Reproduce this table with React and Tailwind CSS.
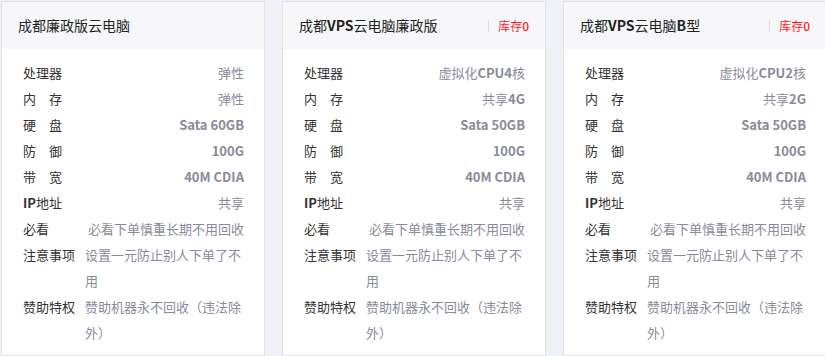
import React from 'react';

const cards = [
  {
    title: '成都廉政版云电脑',
    stock: null,
    specs: ['弹性', '弹性', 'Sata 60GB', '100G', '40M CDIA', '共享'],
  },
  {
    title: '成都VPS云电脑廉政版',
    stock: '库存0',
    specs: ['虚拟化CPU4核', '共享4G', 'Sata 50GB', '100G', '40M CDIA', '共享'],
  },
  {
    title: '成都VPS云电脑B型',
    stock: '库存0',
    specs: ['虚拟化CPU2核', '共享2G', 'Sata 50GB', '100G', '40M CDIA', '共享'],
  },
];

const labels = [['处理器'], ['内', '存'], ['硬', '盘'], ['防', '御'], ['带', '宽'], ['IP地址']];

// latin runs come out heavier than the CJK around them
function Mixed({ text, weight = 'font-bold' }) {
  const parts = text.split(/([A-Za-z0-9][A-Za-z0-9 ]*)/);
  return parts.map((p, i) =>
    /^[A-Za-z0-9]/.test(p) ? (
      <span key={i} className={weight}>{p}</span>
    ) : (
      <span key={i}>{p}</span>
    )
  );
}

function Label({ parts }) {
  if (parts.length === 1) {
    return (
      <span className="shrink-0 text-[#333]">
        <Mixed text={parts[0]} />
      </span>
    );
  }
  return (
    <span className="flex w-[39px] shrink-0 justify-between text-[#333]">
      <span>{parts[0]}</span>
      <span>{parts[1]}</span>
    </span>
  );
}

function Card({ card }) {
  return (
    <div className="w-[264px] shrink-0 border border-[#e1e1ea] bg-white">
      <div className="flex h-[47px] items-center justify-between bg-[#f7f7fa] pl-[16px] pr-[16px]">
        <span className="text-[14px] text-[#222]">
          <Mixed text={card.title} weight="font-semibold" />
        </span>
        {card.stock && (
          <div className="flex items-center">
            <span className="mr-[9px] h-[12px] w-px bg-[#dcdce2]" />
            <span className="text-[12px] text-[#ff1a1a]">
              <Mixed text={card.stock} weight="font-medium" />
            </span>
          </div>
        )}
      </div>
      <div className="px-[20px] pb-[10px] pt-[11px] text-[13px] leading-[26px]">
        {card.specs.map((v, i) => (
          <div key={i} className="flex justify-between pl-px">
            <Label parts={labels[i]} />
            <span className="text-[#8a8a9a]">
              <Mixed text={v} />
            </span>
          </div>
        ))}
        <div className="flex justify-between pl-px">
          <span className="shrink-0 text-[#333]">必看</span>
          <span className="text-[#8a8a9a]">必看下单慎重长期不用回收</span>
        </div>
        <div className="flex pl-px">
          <span className="shrink-0 text-[#333]">注意事项</span>
          <span className="ml-[10px] text-[#8a8a9a]">设置一元防止别人下单了不用</span>
        </div>
        <div className="flex pl-px">
          <span className="shrink-0 text-[#333]">赞助特权</span>
          <span className="ml-[10px] text-[#8a8a9a]">赞助机器永不回收（违法除外）</span>
        </div>
      </div>
    </div>
  );
}

export default function App() {
  return (
    <div
      className="flex h-[356px] w-[825px] gap-[17px] overflow-hidden bg-[#f0f0f7] pl-px pt-px"
      style={{ fontFamily: '"Microsoft YaHei", "Noto Sans CJK SC", sans-serif' }}
    >
      {cards.map((c, i) => (
        <Card key={i} card={c} />
      ))}
    </div>
  );
}
